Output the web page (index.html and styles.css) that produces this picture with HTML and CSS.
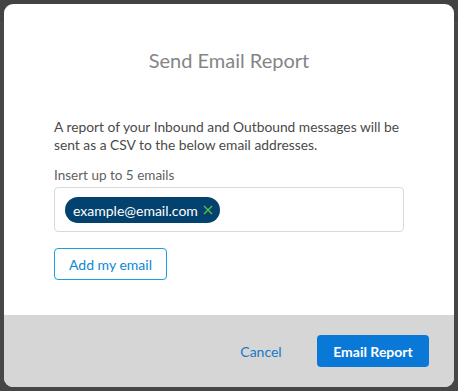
FILE: index.html
```html
<!DOCTYPE html>
<html>
<head>
    <title>Send Email Report</title>
    <link rel="stylesheet" href="styles.css">
    <meta name="viewport" content="width=device-width, initial-scale=1.0">
</head>
<body>
    <div class="page-top"></div>
    <div class="modal">
        <div class="modal-body">
            <h2>Send Email Report</h2>
            <p class="intro">A report of your Inbound and Outbound messages will be sent as a CSV to the below email addresses.</p>

            <label class="field-label">Insert up to 5 emails</label>
            <div class="email-box">
                <span class="chip">example@email.com
                    <svg class="chip-x" width="10" height="10" viewBox="0 0 10 10">
                        <path d="M1 1L9 9M9 1L1 9" stroke="#5cc14a" stroke-width="1.3" fill="none"/>
                    </svg>
                </span>
            </div>

            <button class="btn-outline">Add my email</button>
        </div>
        <div class="modal-footer">
            <button class="btn-link">Cancel</button>
            <button class="btn-primary">Email Report</button>
        </div>
    </div>
</body>
</html>
```

FILE: styles.css
```css
html, body {
    margin: 0;
    height: 100%;
}

body {
    font-family: 'Lato', 'Liberation Sans', sans-serif;
    background-color: #464646;
    padding: 4px;
    box-sizing: border-box;
}

/* strip of the page header behind the overlay */
.page-top {
    position: absolute;
    top: 0;
    left: 0;
    right: 0;
    height: 22px;
    background-color: #434343;
    border-bottom: 1px solid #4d4d4d;
}

.modal {
    position: relative;
    width: 450px;
    background-color: #fff;
    border-radius: 9px;
    overflow: hidden;
}

.modal-body {
    padding: 44px 50px 35px;
}

h2 {
    margin: 0;
    text-align: center;
    font-size: 20px;
    font-weight: 400;
    line-height: 24px;
    color: #858585;
}

.intro {
    margin: 46px 0 12px;
    font-size: 13.8px;
    line-height: 18px;
    color: #4a4a4a;
}

.field-label {
    display: block;
    font-size: 13.5px;
    line-height: 18px;
    color: #5f5f5f;
    margin-bottom: 3px;
}

.email-box {
    height: 45px;
    box-sizing: border-box;
    border: 1px solid #dadada;
    border-radius: 4px;
    padding: 9px 10px;
}

.chip {
    display: inline-flex;
    align-items: center;
    height: 26px;
    padding: 0 7px 0 8px;
    border-radius: 13px;
    background-color: #03426f;
    color: #fff;
    font-size: 14px;
}

.chip-x {
    margin-left: 5px;
}

.btn-outline {
    margin-top: 16px;
    height: 32px;
    width: 113px;
    background: #fff;
    border: 1px solid #1a9fe0;
    border-radius: 4px;
    color: #0b88d3;
    font-family: inherit;
    font-size: 14px;
}

.modal-footer {
    display: flex;
    justify-content: flex-end;
    align-items: center;
    gap: 20px;
    height: 72px;
    padding-right: 25px;
    background-color: #d6d6d6;
}

.btn-link {
    width: 72px;
    height: 32px;
    background: transparent;
    border: none;
    border-radius: 4px;
    color: #1479c9;
    font-family: inherit;
    font-size: 14px;
}

.btn-primary {
    width: 112px;
    height: 32px;
    background-color: #0a78d6;
    border: none;
    border-radius: 4px;
    color: #fff;
    font-family: inherit;
    font-size: 14px;
    font-weight: 700;
}
```
